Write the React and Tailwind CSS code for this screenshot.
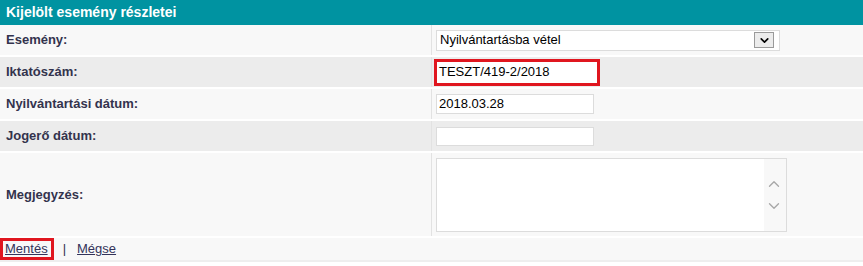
import { ChevronDown, ChevronUp } from 'lucide-react'

const font = { fontFamily: '"Liberation Sans", Arial, sans-serif' }

function Sor({ cimke, szurke, magas, children }) {
  return (
    <div className={`flex border-b-2 border-white ${szurke ? 'bg-[#ececec]' : 'bg-[#f8f8f8]'} ${magas ? 'h-[85px]' : 'h-[32px]'}`}>
      <div className="w-[432px] flex items-center pl-[6px] text-[13px] font-bold text-[#33334d] border-r border-[#e2e2e2]">
        {cimke}
      </div>
      <div className="flex-1 flex items-center pl-[4px]">{children}</div>
    </div>
  )
}

export default function App() {
  return (
    <div className="w-[863px] h-[266px] bg-white" style={font}>
      <div className="h-[25px] bg-[#0093a1] flex items-center pl-[6px] text-white font-bold text-[14px]">
        Kijelölt esemény részletei
      </div>

      <Sor cimke="Esemény:">
        <div className="w-[344px] h-[21px] bg-white border border-[#dcdcdc] flex items-center justify-between pl-[3px] pr-[5px] text-[13px] text-black">
          <span>Nyilvántartásba vétel</span>
          <span className="w-[20px] h-[16px] border border-[#9a9a9a] bg-[#ececec] flex items-center justify-center">
            <ChevronDown size={13} strokeWidth={3} className="text-black" />
          </span>
        </div>
      </Sor>

      <Sor cimke="Iktatószám:" szurke>
        <div className="-ml-[2px] w-[166px] h-[27px] border-[3px] border-[#e0161f] bg-white flex items-center pl-[2px] text-[13px] text-black">
          TESZT/419-2/2018
        </div>
      </Sor>

      <Sor cimke="Nyilvántartási dátum:">
        <div className="w-[158px] h-[20px] bg-white border border-[#dcdcdc] flex items-center pl-[2px] text-[13px] text-black">
          2018.03.28
        </div>
      </Sor>

      <Sor cimke="Jogerő dátum:" szurke>
        <div className="w-[158px] h-[19px] bg-white border border-[#dcdcdc]" />
      </Sor>

      <Sor cimke="Megjegyzés:" magas>
        <div className="w-[351px] h-[74px] bg-white border border-[#dcdcdc] flex justify-end">
          <div className="w-[22px] h-full bg-[#f8f8f8] flex flex-col items-center justify-center gap-[4px] text-[#a8a8a8] pr-[3px]">
            <ChevronUp size={18} strokeWidth={1.8} />
            <ChevronDown size={18} strokeWidth={1.8} />
          </div>
        </div>
      </Sor>

      <div className="h-[24px] bg-[#f8f8f8] border-b-2 border-[#eeeeee] flex items-center text-[13px] text-[#33334d]">
        <span className="border-[3px] border-[#e0161f] pl-[2px] pr-[3px] leading-[16px]">
          <a href="#" className="underline text-[#33335a]">Mentés</a>
        </span>
        <span className="ml-[9px] mr-[11px]">|</span>
        <a href="#" className="underline text-[#33335a]">Mégse</a>
      </div>
    </div>
  )
}
